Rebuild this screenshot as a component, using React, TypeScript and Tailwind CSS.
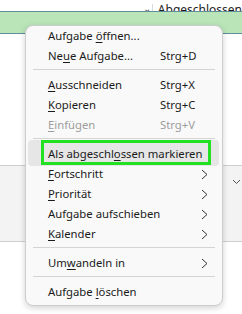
import React from "react";

type Item =
  | { kind: "sep" }
  | {
      kind: "item";
      label: React.ReactNode;
      shortcut?: string;
      sub?: boolean;
      disabled?: boolean;
      active?: boolean;
    };

const U = ({ c }: { c: string }) => <span className="underline underline-offset-[2px]">{c}</span>;

const items: Item[] = [
  { kind: "item", label: <>Aufgabe <U c="ö" />ffnen...</> },
  { kind: "item", label: <>Ne<U c="u" />e Aufgabe...</>, shortcut: "Strg+D" },
  { kind: "sep" },
  { kind: "item", label: <><U c="A" />usschneiden</>, shortcut: "Strg+X" },
  { kind: "item", label: <><U c="K" />opieren</>, shortcut: "Strg+C" },
  { kind: "item", label: <><U c="E" />infügen</>, shortcut: "Strg+V", disabled: true },
  { kind: "sep" },
  { kind: "item", label: <>Als abgeschl<U c="o" />ssen markieren</>, active: true },
  { kind: "item", label: <><U c="F" />ortschritt</>, sub: true },
  { kind: "item", label: <><U c="P" />riorität</>, sub: true },
  { kind: "item", label: <>Aufgabe aufschieben</>, sub: true },
  { kind: "item", label: <><U c="K" />alender</>, sub: true },
  { kind: "sep" },
  { kind: "item", label: <>Um<U c="w" />andeln in</>, sub: true },
  { kind: "sep" },
  { kind: "item", label: <>Aufgabe <U c="l" />öschen</> },
];

const Chevron = () => (
  <svg width="7" height="11" viewBox="0 0 7 11" fill="none" className="text-[#333]">
    <path d="M1 1l5 4.5L1 10" stroke="currentColor" strokeWidth="1" />
  </svg>
);

export default function App() {
  return (
    <div
      className="relative w-[242px] h-[314px] overflow-hidden bg-white text-[11.3px] text-[#1b1b1b]"
      style={{ fontFamily: '"Noto Sans", "Open Sans", sans-serif' }}
    >
      {/* background list */}
      <div className="flex h-[11px] items-end overflow-hidden">
        <div className="w-[143px]" />
        <div className="w-[9px] text-[10px] leading-[6px] text-[#555]">⌄</div>
        <div className="h-full border-l border-[#d9d9d9] pl-[5px] text-[12px] leading-[12px] translate-y-[4px]">
          Abgeschlossen
        </div>
      </div>
      <div className="h-[23px] border-y border-[#5f8d98] bg-[#b9e5b9]" />
      <div className="h-[131px]" />
      <div className="relative h-[77px] border-y border-[#cfcfcf] bg-[#f3f3f3]">
        <svg width="9" height="6" viewBox="0 0 9 6" className="absolute left-[232px] top-[13px]">
          <path d="M1 1l3.5 3.5L8 1" stroke="#555" strokeWidth="1" fill="none" />
        </svg>
      </div>

      {/* context menu */}
      <div className="absolute left-[25px] top-[25px] w-[198px] rounded-[8px] border border-[#cdcdcd] bg-[#f9f9f9] pb-[3px] shadow-[0_2px_6px_rgba(0,0,0,0.18)]">
        {items.map((it, i) =>
          it.kind === "sep" ? (
            <div key={i} className="pt-[3px] pb-[5px] px-[7px]">
              <div className="h-px bg-[#d4d4d4]" />
            </div>
          ) : (
            <div
              key={i}
              className={`relative flex h-[20px] items-center pl-[22px] pr-[14px] ${
                it.disabled ? "text-[#9d9d9d]" : ""
              }`}
            >
              {it.active && (
                <>
                  <div className="absolute left-[2px] right-[3px] -top-[4px] -bottom-[2px] rounded-[4px] bg-[#e6e6e6]" />
                  <div className="absolute left-[15px] right-[11px] -top-[4px] -bottom-[1px] border-[3px] border-[#22e022]" />
                </>
              )}
              <span className="relative flex-1 whitespace-nowrap">{it.label}</span>
              {it.shortcut && <span className="relative w-[48px] whitespace-nowrap">{it.shortcut}</span>}
              {it.sub && <Chevron />}
            </div>
          )
        )}
      </div>
    </div>
  );
}
